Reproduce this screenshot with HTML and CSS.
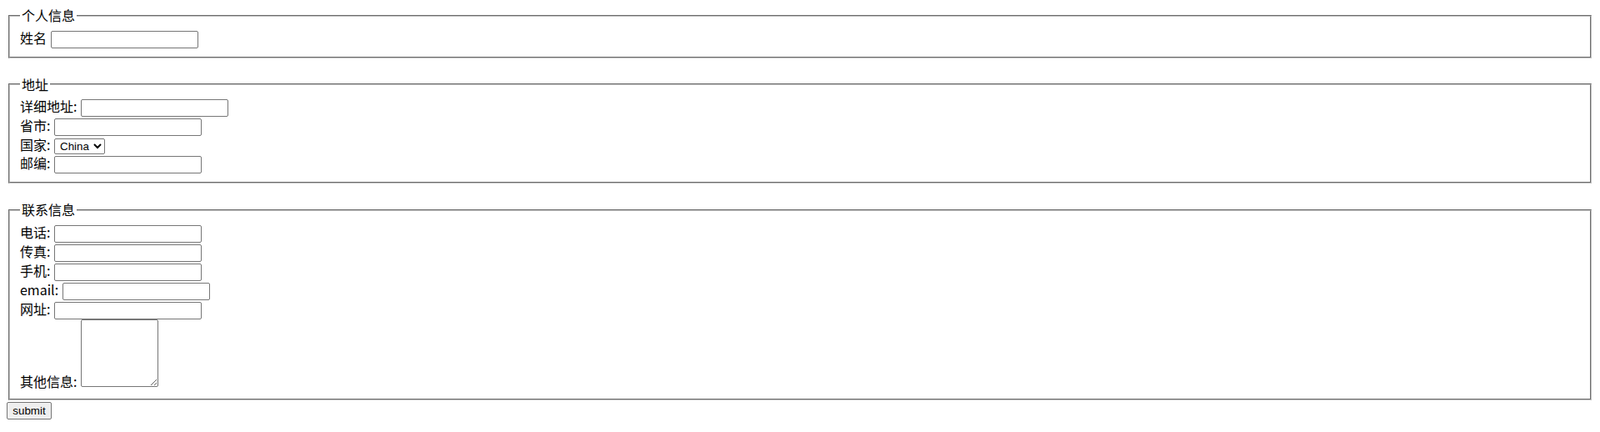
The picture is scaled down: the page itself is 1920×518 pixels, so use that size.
FILE: index.html
```html
<!DOCTYPE html>
<html lang="zh-CN">
<head>
<meta charset="utf-8">
<title>表单</title>
<link rel="stylesheet" href="styles.css">
</head>
<body class="page">
<form class="form">
<fieldset class="group">
<legend class="group-title">个人信息</legend>
<label class="label">姓名</label> <input class="field" type="text">
</fieldset>
<br>
<fieldset class="group">
<legend class="group-title">地址</legend>
<label class="label">详细地址:</label> <input class="field" type="text"><br>
<label class="label">省市:</label> <input class="field" type="text"><br>
<label class="label">国家:</label> <select class="choice"><option>China</option></select><br>
<label class="label">邮编:</label> <input class="field" type="text">
</fieldset>
<br>
<fieldset class="group">
<legend class="group-title">联系信息</legend>
<label class="label">电话:</label> <input class="field" type="text"><br>
<label class="label">传真:</label> <input class="field" type="text"><br>
<label class="label">手机:</label> <input class="field" type="text"><br>
<label class="label">email:</label> <input class="field" type="text"><br>
<label class="label">网址:</label> <input class="field" type="text"><br>
<label class="label">其他信息:</label> <textarea class="note"></textarea>
</fieldset>
<input class="submit" type="submit" value="submit">
</form>
</body>
</html>
```

FILE: styles.css
```css
.page {
  margin: 8px;
  font-family: "Noto Sans CJK SC", "Liberation Sans", sans-serif;
  font-size: 16px;
  line-height: 21px;
  color: #000;
  background: #fff;
}

.form {
  margin: 0;
}

.group {
  margin: 0 2px;
  padding: 0.35em 0.75em 0.625em;
  border: 2px groove rgb(192, 192, 192);
}

.group-title {
  padding: 0 2px;
}

.label {
  margin-right: 1px;
}

.field {
  box-sizing: border-box;
  width: 177px;
  height: 21px;
  padding: 1px 2px;
  margin: 0;
  border: 1px solid #767676;
  border-radius: 2px;
  font: 13.333px "Liberation Sans", Arial, sans-serif;
}

.choice {
  box-sizing: border-box;
  height: 19px;
  width: 61px;
  margin: 0;
  padding: 0 0 0 2px;
  border: 1px solid #767676;
  border-radius: 2px;
  background: #fff;
  font: 13.333px "Liberation Sans", Arial, sans-serif;
}

.note {
  box-sizing: border-box;
  width: 93px;
  height: 81px;
  margin: 0;
  padding: 2px;
  border: 1px solid #767676;
  border-radius: 2px;
  resize: both;
  font: 13.333px "Liberation Mono", monospace;
}

.submit {
  box-sizing: border-box;
  min-width: 54px;
  height: 21px;
  margin: 0;
  padding: 1px 6px;
  border: 1px solid #767676;
  border-radius: 2px;
  background: #efefef;
  font: 13.333px "Liberation Sans", Arial, sans-serif;
  color: #000;
}
```
